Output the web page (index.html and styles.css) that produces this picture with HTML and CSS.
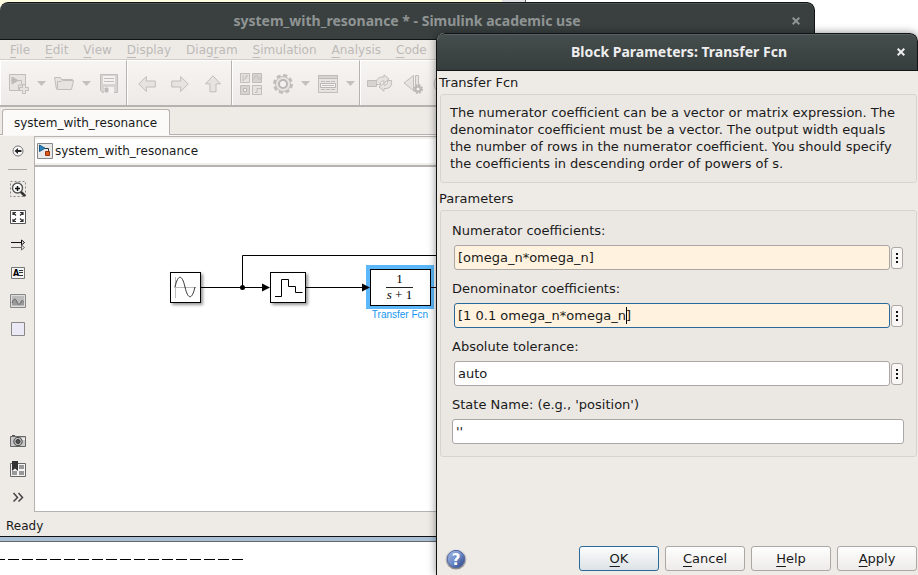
FILE: index.html
```html
<!DOCTYPE html>
<html lang="en">
<head>
<meta charset="utf-8">
<title>system_with_resonance * - Simulink academic use</title>
<link rel="stylesheet" href="styles.css">
</head>
<body>
<div class="backdrop">
  <div class="backdrop-top"></div>
  <div class="backdrop-bottom"><div class="dashes"></div></div>
</div>

<main class="window editor">
  <header class="titlebar inactive">
    <h1>system_with_resonance * - Simulink academic use</h1>
    <button class="close" aria-label="Close editor"><svg width="8" height="8" viewBox="0 0 8 8"><path d="M.7.7l6.6 6.6M7.3.7L.7 7.3"/></svg></button>
  </header>
  <nav class="menubar">
    <a href="#"><u>F</u>ile</a><a href="#"><u>E</u>dit</a><a href="#"><u>V</u>iew</a><a href="#"><u>D</u>isplay</a><a href="#">Diag<u>r</u>am</a><a href="#"><u>S</u>imulation</a><a href="#"><u>A</u>nalysis</a><a href="#"><u>C</u>ode</a>
  </nav>
  <div class="toolbar">
    <div class="group">
      <button aria-label="New model"><svg width="20" height="20" viewBox="0 0 20 20"><path class="soft" d="M.5.5h16v16H.5z"/><path class="dark" d="M3 3v7l6-3.500z"/><path d="M2 6.500h10.500v4M9.500 16v-5h6v5z" /><path class="plus" d="M13.500 10.500h3v3h3v3h-3v3h-3v-3h-3v-3h3z"/></svg></button>
      <button class="caret" aria-label="New options"></button>
      <button aria-label="Open"><svg width="20" height="20" viewBox="0 0 20 20"><path class="soft" d="M2.500 15.500L.5 3.500h6l1 2h11v3"/><path class="plus" d="M3.500 15.500v-8h4l1-1h11l-2 9z"/></svg></button>
      <button class="caret" aria-label="Open options"></button>
      <button aria-label="Save"><svg width="20" height="20" viewBox="0 0 20 20"><path class="mid" d="M1.500.5h17v18h-15l-2-2z"/><path class="light" d="M4 2h12v8H4zM5 13h10v6H5z"/><path d="M5 4.500h10M5 7.500h10"/><path class="dark" d="M6 14h3v4H6z"/></svg></button>
    </div>
    <div class="group nav">
      <button aria-label="Back"><svg width="18" height="18" viewBox="0 0 18 18"><path class="soft" d="M.8 9l7.500-7.500V6h9v6h-9v4.500z"/></svg></button>
      <button aria-label="Forward"><svg width="18" height="18" viewBox="0 0 18 18"><path class="soft" d="M17.200 9L9.700 1.500V6h-9v6h9v4.500z"/></svg></button>
      <button aria-label="Up to parent"><svg width="18" height="18" viewBox="0 0 18 18"><path class="soft" d="M9 .8l7.500 8H12v8H6v-8H1.500z"/></svg></button>
    </div>
    <div class="group view">
      <button aria-label="Library browser"><svg width="25" height="22" viewBox="0 0 25 22"><path class="soft" d="M.5.5h9v9h-9zM12.500 12.500h9v9h-9z"/><path class="mid" d="M12.500.5h9v9h-9zM.5 12.500h9v9h-9z"/><path d="M3 2v6l5-6M6 2v4M14 6c2-5 3-4 4-1s2 2 3-1M15 19.500h2v-4h4"/><path class="light edge" d="M3.500 15.500h3v3h-3z"/></svg></button>
      <button aria-label="Model configuration"><svg width="20" height="20" viewBox="0 0 20 20"><circle class="gear" cx="10" cy="10" r="8.500"/><circle class="soft" cx="10" cy="10" r="7.500"/><circle class="light ring" cx="10" cy="10" r="4"/></svg></button>
      <button class="caret" aria-label="Configuration options"></button>
      <button aria-label="Model explorer"><svg width="20" height="20" viewBox="0 0 20 20"><path class="soft" d="M.5 1.500h19v17H.5z"/><path class="mid" d="M.5 1.500h19v3H.5z"/><path d="M3 7.500h4m1 0h4m1 0h4M3 15.500h4m1 0h4m1 0h4"/><path class="light edge" d="M2.500 9.500h15v4h-15z"/><path d="M4 11.500h12"/></svg></button>
      <button class="caret" aria-label="Explorer options"></button>
    </div>
    <div class="group last">
      <button aria-label="Update diagram"><svg width="28" height="20" viewBox="0 0 28 20"><path class="mid" d="M.5 6.500h9v6h-9z"/><path class="soft" d="M9.500 10.500C8.500 5 12 2.500 17 3V.8l5 4.200-5 4.200V7c-2.500-.3-4 1-3.500 3.500z"/><path class="soft" d="M20.500 6.500h4c.8 6-2 8.500-7.500 8v2.700L12 13l5-4.200V11c2.500.3 4-1.500 3.500-4.500z"/></svg></button>
      <button aria-label="Step back"><svg width="20" height="20" viewBox="0 0 20 20"><path class="soft" d="M10.500 1.500v15L1 9z"/><path class="soft" d="M12.500 1.500h3v11h-3z"/><circle class="gear small" cx="15" cy="15" r="4"/><circle class="light ring" cx="15" cy="15" r="2.500"/></svg></button>
      <button aria-label="Run"><svg width="20" height="20" viewBox="0 0 20 20"><circle class="soft" cx="12" cy="10" r="9"/></svg></button>
    </div>
  </div>
  <div class="tabs"><button class="tab">system_with_resonance</button></div>
  <div class="workspace">
    <aside class="palette">
      <button aria-label="Hide browser"><svg width="16" height="16" viewBox="0 0 16 16"><circle cx="8" cy="8" r="5" fill="#fafafa" stroke="#777"/><path d="M4.500 8l3.500-3v2h3.500v2H8v2z" fill="#222"/></svg></button>
      <hr>
      <button aria-label="Zoom"><svg width="16" height="16" viewBox="0 0 16 16"><path d="M.5.5h15v15H.5z" fill="none" stroke="#888" stroke-dasharray="2 2"/><path d="M10.500 10.500L15 15" stroke="#333" stroke-width="2.500"/><circle cx="7.500" cy="7" r="5" fill="#fff" stroke="#555" stroke-width="1.400"/><path d="M5 7.500h5M7.500 5v5" stroke="#111" stroke-width="1.500"/></svg></button>
      <button aria-label="Fit to view"><svg width="16" height="16" viewBox="0 0 16 16"><path d="M.5 1.500h15v13H.5z" fill="#fff" stroke="#555"/><path d="M3 6V3.500h3M3 3.500l3 3M10 3.500h3V6M13 3.500l-3 3M3 10v2.500h3M3 12.500l3-3M13 10v2.500h-3M13 12.500l-3-3" fill="none" stroke="#333" stroke-width="1.200"/></svg></button>
      <button aria-label="Sample time"><svg width="16" height="16" viewBox="0 0 16 16"><path d="M1 5.500h10M11.500 3l3 2.500-3 2.500z" fill="none" stroke="#111"/><path d="M1 10.500h10M11.500 8l3 2.500-3 2.500z" fill="none" stroke="#666"/></svg></button>
      <button aria-label="Annotation"><svg width="16" height="16" viewBox="0 0 16 16"><path d="M1.500 2.500h13v11h-13z" fill="#f2f4f6" stroke="#777"/><text x="3" y="11" font-family="DejaVu Sans" font-weight="bold" font-size="8">A</text><path d="M9 5.500h4M9 7.500h4M9 10.500h4" stroke="#333"/></svg></button>
      <button aria-label="Image"><svg width="16" height="16" viewBox="0 0 16 16"><path d="M.5 1.500h15v13H.5z" fill="#ddd" stroke="#888"/><path d="M2 3h12v10H2z" fill="#bbb"/><path d="M2 10c2-6 4-4 5-1s3 3 4 0 2-1 3 0v3H2z" fill="#999"/><path d="M2 10c2-6 4-4 5-1s3 3 4 0 2-1 3 0" fill="none" stroke="#666"/></svg></button>
      <button aria-label="Area"><svg width="16" height="16" viewBox="0 0 16 16"><path d="M1.500 1.500h13v13h-13z" fill="#ebe9f6" stroke="#888"/></svg></button>
      <span class="spacer"></span>
      <button aria-label="Screenshot"><svg width="16" height="16" viewBox="0 0 16 16"><path d="M2 2h3v2H2z" fill="#555"/><path d="M.5 3.500h15v10H.5z" fill="#c8c8c8" stroke="#666"/><path d="M12 5h3v2h-3z" fill="#eee"/><circle cx="8" cy="8.500" r="4.200" fill="#bbb" stroke="#444"/><circle cx="8" cy="8.500" r="2" fill="#555" stroke="#333"/></svg></button>
      <button aria-label="Model browser"><svg width="16" height="16" viewBox="0 0 16 16"><path d="M.5 2.500h15v13H.5z" fill="#f4f4f4" stroke="#666"/><path d="M9 4h5v4H9zM9 10h5v4H9zM2 10h5v4H2z" fill="#999"/><path d="M2 0h6v10L5 7.500 2 10z" fill="#333"/></svg></button>
      <button aria-label="More"><svg width="16" height="16" viewBox="0 0 16 16"><path d="M3.500 4l4 4.500-4 4M8.500 4l4 4.500-4 4" fill="none" stroke="#444" stroke-width="1.500"/></svg></button>
    </aside>
    <section class="document">
      <div class="breadcrumb">
        <svg width="16" height="16" viewBox="0 0 16 16"><path d="M.5.500h15v15H.5z" fill="#e9e9ea" stroke="#888"/><path d="M2.500 2v6.500L8 5.200z" fill="#2c86c0" stroke="#155a8a"/><path d="M8 5.500h3.500V8" fill="none" stroke="#333"/><path d="M8.500 8.500h4v4h-4z" fill="#dd5a1d" stroke="#9a3208"/></svg>
        <span>system_with_resonance</span>
      </div>
      <div class="canvas">
        <svg width="780" height="344" viewBox="35 167 780 344" role="img" aria-label="Block diagram">
          <defs><filter id="shade" x="-20%" y="-20%" width="150%" height="150%"><feDropShadow dx="2" dy="2" stdDeviation="1.500" flood-opacity=".4"/></filter></defs>
          <path d="M201 287.500h63M306 287.500h60M431 287.500h384M242.500 287.500v-32h572" class="wire"/>
          <circle cx="242.500" cy="287.500" r="2.500"/>
          <rect x="368" y="267" width="64" height="40" class="halo"/>
          <path d="M262 283.500l8 4-8 4zM362 283.500l8 4-8 4z"/>
          <g class="block"><rect x="170.500" y="272.500" width="30" height="30" filter="url(#shade)"/><rect x="270.500" y="272.500" width="35" height="30" filter="url(#shade)"/><rect x="370.500" y="269.500" width="60" height="36"/></g>
          <path d="M175.500 277v21M174 287.500h22" stroke="#bbb"/>
          <path d="M175 287c3-13 7-13 10 0s7 13 10 0" fill="none" stroke="#333"/>
          <path d="M275 296.500h6.500v-17h7v7h7v6h7" fill="none" stroke="#000"/>
          <path d="M386 287.500h27" stroke="#222"/>
          <path d="M431 287.500h5" stroke="#000"/>
          <g class="formula"><text x="399.500" y="283">1</text><text x="399.500" y="299"><tspan font-style="italic">s</tspan> + 1</text></g>
          <text x="400" y="318" class="caption">Transfer Fcn</text>
        </svg>
      </div>
    </section>
  </div>
  <footer class="status">Ready</footer>
</main>

<form class="window dialog" onsubmit="return false">
  <header class="titlebar">
    <h2>Block Parameters: Transfer Fcn</h2>
    <button type="button" class="close" aria-label="Close dialog"><svg width="8" height="8" viewBox="0 0 8 8"><path d="M.7.7l6.6 6.6M7.3.7L.7 7.3"/></svg></button>
  </header>
  <div class="content">
    <h3>Transfer Fcn</h3>
    <p class="panel about">The numerator coefficient can be a vector or matrix expression. The denominator coefficient must be a vector. The output width equals the number of rows in the numerator coefficient. You should specify the coefficients in descending order of powers of s.</p>
    <h3>Parameters</h3>
    <div class="panel fields">
      <label for="num">Numerator coefficients:</label>
      <div class="row"><input id="num" class="edited" value="[omega_n*omega_n]"><button type="button" class="more" aria-label="Numerator options"></button></div>
      <label for="den">Denominator coefficients:</label>
      <div class="row"><input id="den" class="edited current" value="[1 0.1 omega_n*omega_n]"><span class="cursor"></span><button type="button" class="more" aria-label="Denominator options"></button></div>
      <label for="tol">Absolute tolerance:</label>
      <div class="row"><input id="tol" value="auto"><button type="button" class="more" aria-label="Tolerance options"></button></div>
      <label for="state">State Name: (e.g., 'position')</label>
      <div class="row wide"><input id="state" value="''"></div>
    </div>
  </div>
  <footer class="actions">
    <button type="button" class="help" aria-label="About this block"><svg width="22" height="22" viewBox="0 0 22 22"><defs><linearGradient id="ball" x1="0" y1="0" x2="1" y2="1"><stop offset="0" stop-color="#a9bce6"/><stop offset=".5" stop-color="#6f8bc8"/><stop offset="1" stop-color="#243c80"/></linearGradient><linearGradient id="rim" x1="0" y1="0" x2="0" y2="1"><stop offset="0" stop-color="#eee"/><stop offset="1" stop-color="#888"/></linearGradient></defs><circle cx="11" cy="11" r="10.500" fill="url(#rim)"/><circle cx="11" cy="11" r="8.700" fill="url(#ball)" stroke="#5468a0"/><text x="11" y="16.500" text-anchor="middle" font-family="DejaVu Sans" font-weight="bold" font-size="15" fill="#fff">?</text></svg></button>
    <button class="ok"><u>O</u>K</button>
    <button type="button"><u>C</u>ancel</button>
    <button type="button"><u>H</u>elp</button>
    <button type="button"><u>A</u>pply</button>
  </footer>
</form>
</body>
</html>
```
FILE: styles.css
```css
* { box-sizing: border-box; }

html, body { height: 100%; }

body {
  position: relative;
  margin: 0;
  overflow: hidden;
  background: #fff;
  color: #1a1a1a;
  font: 13px/17px "DejaVu Sans", sans-serif;
}

button, input { font: inherit; color: inherit; }
button { padding: 0; border: 0; background: none; }
button svg { display: block; }
h1, h2, h3, p { margin: 0; font-size: 13px; font-weight: normal; }
u { text-decoration: underline; text-underline-offset: 3px; text-decoration-skip-ink: none; }

/* Desktop behind the windows */
.backdrop {
  display: flex;
  flex-direction: column;
  justify-content: space-between;
  height: 100%;
}
.backdrop-top {
  height: 10px;
  background: linear-gradient(90deg, #fffddf 502px, #e2e2e6 502px, #e2e2e6 525px, #666 525px, #666 526px, #fff 526px);
}
.backdrop-bottom {
  height: 38px;
  border-top: 4px solid #a9bfd6;
  box-shadow: inset 0 1px #666;
}
.dashes {
  width: 243px;
  height: 1px;
  margin-top: 18px;
  background: repeating-linear-gradient(90deg, #000 0 5px, transparent 5px 8px, #000 8px 14px);
}

/* Window frames */
.window {
  position: absolute;
  display: flex;
  flex-direction: column;
  background: #eeebe7;
  border-radius: 8px 8px 0 0;
  overflow: hidden;
}
.editor {
  top: 2px;
  right: 103px;
  bottom: 38px;
  left: 0;
  border-bottom: 1px solid #111;
  font-size: 12px;
}
.dialog {
  top: 33px;
  right: 0;
  bottom: 0;
  left: 436px;
  border-left: 1px solid #111;
  box-shadow: 0 0 8px rgba(0, 0, 0, .45);
}
.titlebar {
  display: flex;
  align-items: center;
  flex: none;
  height: 38px;
  padding: 0 12px 0 24px;
  border: 1px solid #111515;
  border-left: 0;
  border-radius: 8px 8px 0 0;
  background: linear-gradient(#454d4d, #363d3d);
  box-shadow: inset 0 1px #566060;
  color: #eee;
}
.titlebar.inactive {
  padding: 0 14px 0 22px;
  background: #3a4040;
  color: #8f9494;
  box-shadow: inset 0 1px #4d5454;
}
.titlebar h1, .titlebar h2 {
  flex: 1;
  text-align: center;
  font: bold 14px/18px "Noto Sans", sans-serif;
}
.close { width: 8px; height: 8px; }
.close path { stroke: currentColor; stroke-width: 2; }

/* Editor chrome */
.menubar {
  display: flex;
  gap: 15px;
  flex: none;
  height: 20px;
  padding: 2px 10px 0;
  border-bottom: 1px solid #d0cdca;
}
.menubar a { color: #bdbab7; text-decoration: none; }
.toolbar {
  display: flex;
  flex: none;
  height: 47px;
  border-bottom: 2px solid #b5b2af;
  background: linear-gradient(#f7f5f2, #edeae7);
}
.group {
  display: flex;
  align-items: center;
  gap: 8px;
  padding: 1px 7px 0 8px;
  border-top: 1px solid #fff;
  border-left: 1px solid #fff;
  border-right: 1px solid #b5b2af;
}
.group.nav { gap: 15px; padding: 1px 9px 0 10px; }
.group.view { padding: 1px 4px 0 7px; }
.group.last { flex: 1; padding-left: 6px; border-right: 0; }
.toolbar svg path, .toolbar svg circle { fill: none; stroke: #c0bdba; }
.toolbar svg .soft, .toolbar svg .plus { fill: #e6e3e0; }
.toolbar svg .mid { fill: #d6d3d0; }
.toolbar svg .light { fill: #f4f2f0; stroke: none; }
.toolbar svg .light.edge, .toolbar svg .light.ring { stroke: #bab7b4; }
.toolbar svg .ring { stroke-width: 2; }
.toolbar svg .dark { fill: #bab7b4; }
.toolbar svg .gear { stroke-width: 3; stroke-dasharray: 4 2.670; }
.toolbar svg .gear.small { stroke-width: 2; stroke-dasharray: 2 1.140; }
.caret {
  width: 9px;
  height: 5px;
  background: #c3c0bd;
  clip-path: polygon(0 0, 100% 0, 50% 100%);
}

.tabs {
  display: flex;
  flex: none;
  height: 29px;
  padding: 2px 2px 0;
  border-bottom: 1px solid #f8f7f5;
  box-shadow: inset 0 -1px #b5b2af;
}
.tab {
  padding: 1px 12px 0 11px;
  border: 1px solid #b5b2af;
  border-bottom: 0;
  border-radius: 3px 3px 0 0;
  background: #fbfaf8;
}

.workspace { display: flex; flex: 1; min-height: 0; }
.palette {
  display: flex;
  flex-direction: column;
  flex: none;
  width: 34px;
  padding: 1px 0 1px 2px;
}
.palette button { display: grid; place-items: center; flex: none; height: 28px; }
.palette hr { width: 19px; margin: 4px auto 5px 6px; border: 0; border-top: 1px solid #aaa8a5; }
.spacer { flex: 1; }
.document {
  display: flex;
  flex-direction: column;
  flex: 1;
  min-width: 0;
  border: 1px solid #b5b2af;
  border-right: 0;
}
.breadcrumb {
  display: flex;
  align-items: center;
  gap: 2px;
  flex: none;
  height: 28px;
  padding-left: 2px;
  border: solid #f2f0ed;
  border-width: 2px 0;
  background: #fff;
}
.canvas { flex: 1; min-height: 0; overflow: hidden; background: #fff; border-top: 2px solid #b5b2af; }
.canvas svg { display: block; }
.wire { fill: none; stroke: #000; }
.halo { fill: none; stroke: #5cb8fa; stroke-width: 4; }
.block rect { fill: #fff; stroke: #000; }
.formula { font: 13px "Liberation Serif", serif; text-anchor: middle; }
.caption { font: 10px "Liberation Sans", sans-serif; fill: #1496f0; text-anchor: middle; }
.status { flex: none; height: 24px; padding: 6px 6px 0; }

/* Parameter dialog */
.content { flex: 1; padding: 3px 1px 0 2px; }
.panel {
  border: 1px solid #d6d3d0;
  border-radius: 3px;
  background: #ebe8e4;
}
.about { margin: 3px 0 7px 1px; padding: 9px 9px 10px; }
.fields { margin: 3px 0 0 1px; padding: 11px 12px 12px 11px; }
.fields label { display: block; height: 17px; margin-bottom: 6px; }
.row {
  position: relative;
  display: flex;
  align-items: center;
  gap: 1px;
  margin: 0 1px 10px 2px;
}
.row.wide { margin: 0; }
.row input {
  flex: 1;
  min-width: 0;
  height: 25px;
  padding: 0 3px;
  border: 1px solid #aaa7a4;
  border-radius: 3px;
  outline: 0;
  background: #fff;
}
.row .edited { background: #fff3df; }
.row .current { border-color: #2a6a9b; }
.cursor { position: absolute; top: 4px; left: 172px; width: 1px; height: 17px; background: #000; }
.more {
  width: 12px;
  height: 22px;
  border: 1px solid #aaa7a4;
  border-radius: 3px;
  background:
    linear-gradient(#111, #111) 4px 5px / 2px 2px no-repeat,
    linear-gradient(#111, #111) 4px 9px / 2px 2px no-repeat,
    linear-gradient(#111, #111) 4px 13px / 2px 2px no-repeat,
    #f8f7f6;
}
.actions {
  display: flex;
  align-items: center;
  gap: 6px;
  flex: none;
  padding: 0 1px 4px 8px;
}
.actions button { width: 80px; height: 25px; border: 1px solid #aaa7a4; border-radius: 3px; background: linear-gradient(#fefefe, #eeecea); }
.actions .help { width: 22px; height: 22px; margin-right: auto; border: 0; background: none; }
.actions .ok { border-color: #2a6a9b; background: linear-gradient(#fcfdfd, #dce2e6); }
```
